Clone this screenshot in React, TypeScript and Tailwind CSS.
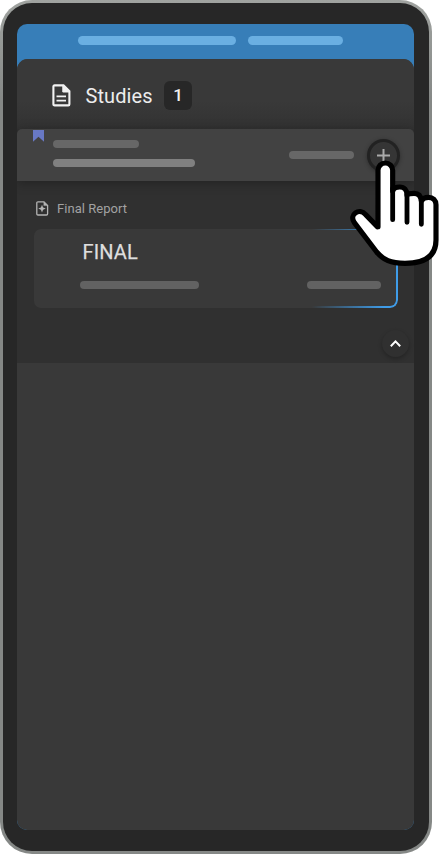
import React from "react";

function Bar({ className }: { className: string }) {
  return <div className={`shrink-0 rounded-full ${className}`} />;
}

function DocumentIcon() {
  return (
    <svg className="h-[23px] w-[19px] shrink-0" viewBox="0 0 19 23" fill="none" stroke="#f2f2f2" strokeWidth="2.1">
      <path d="M2.6 1.4H11.5L17.4 7.3V20.2Q17.4 21.4 16.2 21.4H2.6Q1.4 21.4 1.4 20.2V2.6Q1.4 1.4 2.6 1.4Z" />
      <path d="M10.8 1.5V8H17.4Z" fill="#f2f2f2" strokeWidth="1" />
      <path d="M4.5 12.4H14M4.5 16.6H14" strokeWidth="1.7" />
    </svg>
  );
}

function ReportIcon() {
  return (
    <svg className="h-[15px] w-[13px] shrink-0" viewBox="0 0 13 15" fill="none" stroke="#b4b4b4" strokeWidth="1.3">
      <path d="M2 .8H8L11.6 4.4V12.8Q11.6 14 10.4 14H2Q.8 14 .8 12.8V2Q.8.8 2 .8Z" />
      <path d="M7.8 1V4.6H11.4Z" fill="#b4b4b4" strokeWidth="0.4" />
      <path d="M6 3.8L7.1 6.5L9.8 7.6L7.1 8.7L6 11.4L4.9 8.7L2.2 7.6L4.9 6.5Z" fill="#b4b4b4" stroke="none" />
    </svg>
  );
}

function HandPointer() {
  return (
    <svg className="absolute left-[270px] top-[120px] h-[150px] w-[169px]" viewBox="0 0 507 450">
      <path
        d="M324 320V151A22 22 0 0 1 368 151V213C372 203 380 201 389 201C403 201 411 211 411 225C414 222 422 220 432 220C446 220 453 229 454 243C458 236 466 232 475 232C489 232 498 241 498 254V360C498 405 470 430 405 430C362 430 340 420 320 396L253 308C236 283 268 262 287 284L322 320"
        fill="#fff"
        stroke="#000"
        strokeWidth="15.5"
        strokeLinejoin="round"
        strokeLinecap="round"
      />
      <path d="M368 205V299M411 223V307M454 241V313" stroke="#000" strokeWidth="14.5" strokeLinecap="round" />
    </svg>
  );
}

export default function App() {
  return (
    <div className="relative h-[854px] w-[439px] overflow-hidden bg-white font-[Roboto,sans-serif]">
      <div className="h-[854px] w-[432px] rounded-[32px] bg-[linear-gradient(#a0a3a0,#858886_12%,#858886)] p-[3px]">
        <div className="h-full rounded-[29px] bg-[#272727] pl-3.5 pt-[21px]">
          <div className="flex h-[806px] w-[397px] flex-col overflow-hidden rounded-[10px] bg-[#377eb8]">
            <div className="flex h-[35px] shrink-0 gap-3 pl-[61px] pt-3">
              <Bar className="h-[9px] w-[157.5px] bg-[#6aafe2]" />
              <Bar className="h-[9px] w-[95px] bg-[#6aafe2]" />
            </div>
            <main className="flex-1 overflow-hidden rounded-t-[11px] bg-[#393939]">
              <header className="flex h-[69.5px] items-center bg-[linear-gradient(#393939_60%,#323232)] pl-[35px] pt-1">
                <DocumentIcon />
                <h1 className="ml-[14.5px] w-[78.5px] text-[20px] leading-6 tracking-[0.1px] text-[#ededed]">Studies</h1>
                <span className="flex h-[29px] w-7 items-center justify-center rounded-md bg-[#272727] text-[17px] font-medium text-[#f2f2f2]">1</span>
              </header>
              <section className="h-[234px] bg-[#303030]">
                <div className="flex h-[52px] rounded-t-[5px] bg-[#424242] shadow-[0_2px_12px_rgba(0,0,0,0.3)]">
                  <svg className="ml-4 mt-px h-3 w-[11px] shrink-0" viewBox="0 0 11 12">
                    <path d="M0 0H11V11.7L5.5 6.7L0 11.7Z" fill="#6878c4" />
                  </svg>
                  <div className="ml-[9px] flex w-[142px] flex-col gap-[11px] pt-[11px]">
                    <Bar className="h-2 w-[86px] bg-[#676767]" />
                    <Bar className="h-2 w-[142px] bg-[#808080]" />
                  </div>
                  <Bar className="ml-[94px] mt-[22px] h-2 w-[65px] bg-[#676767]" />
                  <button className="ml-[13px] mt-[10px] flex size-[33px] shrink-0 items-center justify-center rounded-full border-[3px] border-[#222] bg-[#353535] shadow-[0_1px_4px_rgba(0,0,0,0.35)]" aria-label="Add">
                    <svg className="size-[13px]" viewBox="0 0 13 13" stroke="#aaa" strokeWidth="2">
                      <path d="M6.5 0V13M0 6.5H13" />
                    </svg>
                  </button>
                </div>
                <div className="flex items-center pl-[19px] pt-5">
                  <ReportIcon />
                  <h2 className="ml-2 text-[13px] leading-[15px] tracking-[0.04px] text-[#a2a2a2]">Final Report</h2>
                </div>
                <div className="relative ml-[16.5px] mt-[13px] h-[79px] w-[364px] rounded-[7px] bg-[#393939]">
                  <div className="pl-[49px] pt-[11px] text-[20px] leading-6 tracking-[0.1px] text-[#dedede] [-webkit-text-stroke:0.25px_#dedede]">FINAL</div>
                  <div className="flex justify-between pl-[46px] pr-[17px] pt-[17px]">
                    <Bar className="h-2 w-[119.5px] bg-[#626262]" />
                    <Bar className="h-2 w-[74px] bg-[#626262]" />
                  </div>
                  <div className="absolute inset-y-0 right-0 w-[94px] rounded-r-[8px] border-b-2 border-r-2 border-t border-[#3f9ce8] [mask-image:linear-gradient(to_right,transparent_8%,black_85%)]" />
                </div>
                <div className="flex justify-end pr-[5px] pt-[22px]">
                  <button className="flex size-[27px] items-center justify-center rounded-full bg-[#303030] shadow-[0_2px_4px_rgba(0,0,0,0.25)]" aria-label="Collapse">
                    <svg className="h-[7px] w-[11px]" viewBox="0 0 11 7" fill="none" stroke="#fff" strokeWidth="2">
                      <path d="M.8 6.2L5.5 1.4L10.2 6.2" />
                    </svg>
                  </button>
                </div>
              </section>
            </main>
          </div>
        </div>
      </div>
      <HandPointer />
    </div>
  );
}
